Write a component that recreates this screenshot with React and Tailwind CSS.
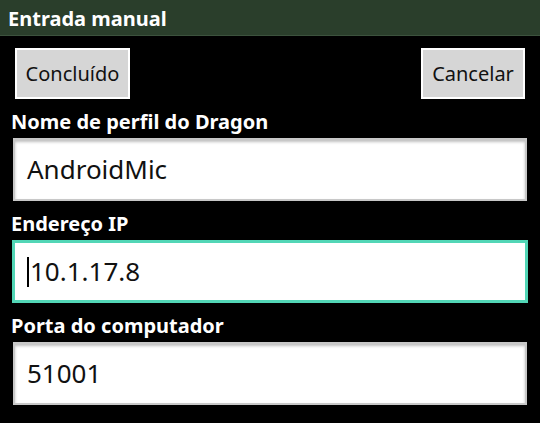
import React from "react";

const font = { fontFamily: '"Noto Sans", "Open Sans", sans-serif' };

function Field({ value, focused }) {
  if (focused) {
    return (
      <div className="mx-[12px] h-[63px] border-[3px] border-[#52d6b6] bg-white flex items-center pl-[12px]">
        <span className="w-[2px] h-[30px] bg-black mr-[1px]" />
        <span className="text-[26px] text-[#111]">{value}</span>
      </div>
    );
  }
  return (
    <div className="mx-[13px] h-[63px] bg-white border-[2px] border-[#c8c8c8] shadow-[inset_0_2px_3px_rgba(0,0,0,0.25)] flex items-center pl-[12px]">
      <span className="text-[26px] text-[#111]">{value}</span>
    </div>
  );
}

function Label({ children }) {
  return (
    <div className="px-[11px] h-[39px] pb-[6px] flex items-end text-white font-bold text-[20px] leading-none">
      {children}
    </div>
  );
}

export default function App() {
  return (
    <div className="w-[540px] h-[423px] bg-black overflow-hidden" style={font}>
      <div className="h-[36px] bg-[#2a3e2b] border-b border-[#3c523d] flex items-center px-[8px] pt-[3px]">
        <span className="text-white font-bold text-[20px] leading-none">Entrada manual</span>
      </div>
      <div className="flex justify-between px-[15px] pt-[12px]">
        <button className="w-[115px] h-[51px] bg-[#d6d6d6] border-[2px] border-white text-[20px] text-[#111] flex items-center justify-center">
          Concluído
        </button>
        <button className="w-[104px] h-[51px] bg-[#d6d6d6] border-[2px] border-white text-[20px] text-[#111] flex items-center justify-center">
          Cancelar
        </button>
      </div>
      <div>
        <Label>Nome de perfil do Dragon</Label>
        <Field value="AndroidMic" />
        <Label>Endereço IP</Label>
        <Field value="10.1.17.8" focused />
        <Label>Porta do computador</Label>
        <Field value="51001" />
      </div>
    </div>
  );
}
